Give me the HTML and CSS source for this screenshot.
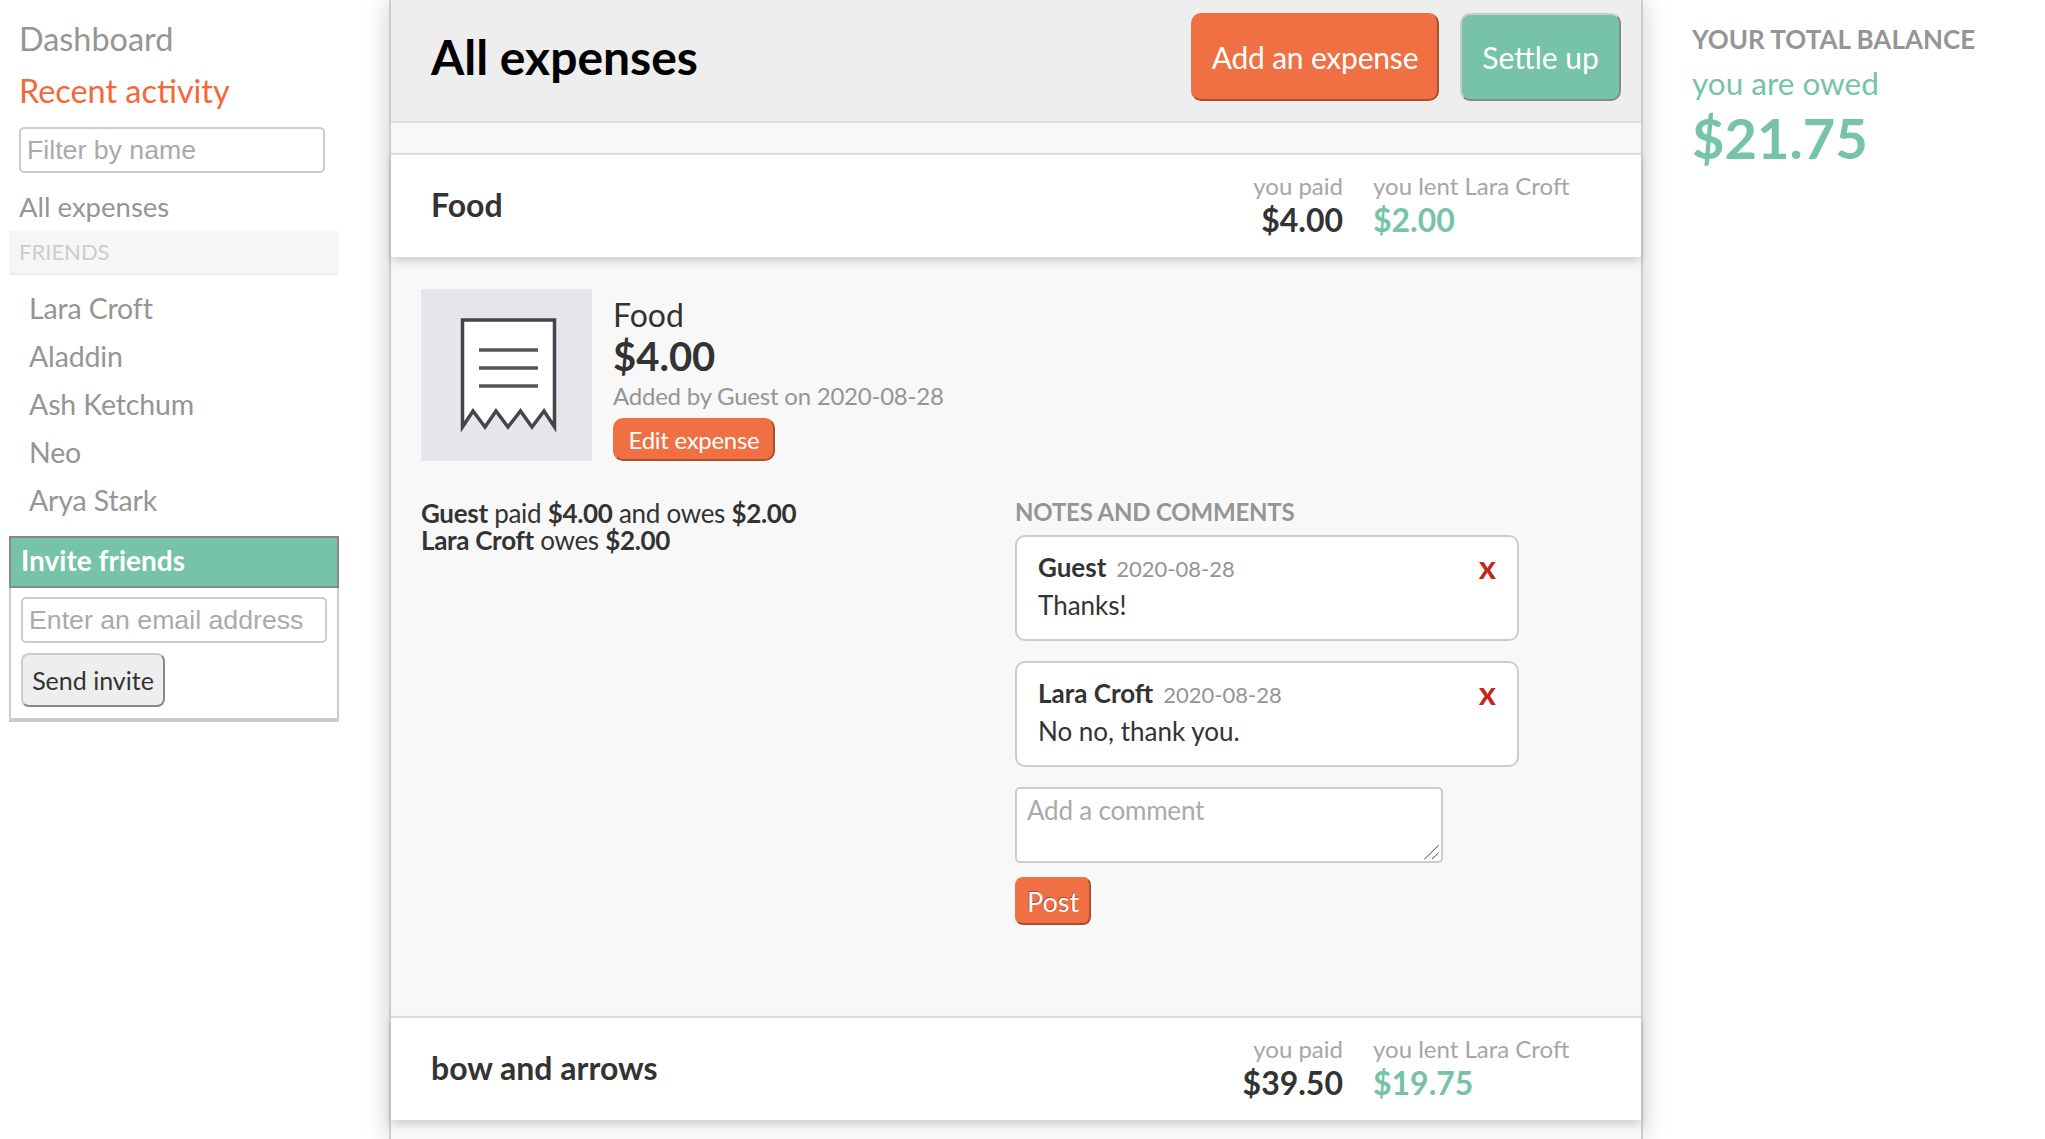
FILE: index.html
```html
<!DOCTYPE html>
<html lang="en">
<head>
  <meta charset="UTF-8" />
  <meta name="viewport" content="width=device-width, initial-scale=1.0" />
  <title>All expenses</title>
  <link rel="stylesheet" href="styles.css">
</head>
<body>
  <div class="page">
    <aside class="sidebar">
      <a class="nav-link">Dashboard</a>
      <a class="nav-link nav-active">Recent activity</a>
      <input class="text-input filter-input" type="text" placeholder="Filter by name" />
      <a class="all-link">All expenses</a>
      <div class="friends-title">FRIENDS</div>
      <ul class="friends">
        <li>Lara Croft</li>
        <li>Aladdin</li>
        <li>Ash Ketchum</li>
        <li>Neo</li>
        <li>Arya Stark</li>
      </ul>
      <div class="invite">
        <div class="invite-title">Invite friends</div>
        <div class="invite-body">
          <input class="text-input" type="text" placeholder="Enter an email address" />
          <button class="btn-send">Send invite</button>
        </div>
      </div>
    </aside>

    <main class="main">
      <header class="top">
        <h1>All expenses</h1>
        <div class="top-actions">
          <button class="btn btn-orange">Add an expense</button>
          <button class="btn btn-green">Settle up</button>
        </div>
      </header>

      <div class="expense">
        <div class="expense-name">Food</div>
        <div class="paid">
          <span class="label">you paid</span>
          <strong>$4.00</strong>
        </div>
        <div class="lent">
          <span class="label">you lent Lara Croft</span>
          <strong>$2.00</strong>
        </div>
      </div>

      <section class="detail">
        <div class="summary">
          <div class="thumb">
            <svg width="171" height="172" viewBox="0 0 171 172">
              <path d="M41.5 138V31H133.5V138L123 122L111 138L99.5 122L87 138L75 122L64 138L52 122Z" fill="#fff" stroke="#43464b" stroke-width="3.5" />
              <path d="M58 61H117M58 79H117M58 97H117" fill="none" stroke="#53565b" stroke-width="3.5" />
            </svg>
          </div>
          <div class="summary-text">
            <div class="summary-name">Food</div>
            <div class="summary-cost">$4.00</div>
            <div class="summary-added">Added by Guest on 2020-08-28</div>
            <button class="btn-small">Edit expense</button>
          </div>
        </div>
        <div class="columns">
          <div class="shares">
            <div><b>Guest</b> paid <b>$4.00</b> and owes <b>$2.00</b></div>
            <div><b>Lara Croft</b> owes <b>$2.00</b></div>
          </div>
          <div class="notes">
            <div class="notes-title">NOTES AND COMMENTS</div>
            <div class="comment">
              <div class="comment-head"><b>Guest</b><span class="comment-date">2020-08-28</span></div>
              <div>Thanks!</div>
              <span class="comment-x">x</span>
            </div>
            <div class="comment">
              <div class="comment-head"><b>Lara Croft</b><span class="comment-date">2020-08-28</span></div>
              <div>No no, thank you.</div>
              <span class="comment-x">x</span>
            </div>
            <div class="comment-wrap">
              <textarea class="comment-box" placeholder="Add a comment"></textarea>
              <svg class="grip" width="16" height="16" viewBox="0 0 16 16">
                <path d="M0.3 15.3L14.6 1.3M8 15L14.6 9" fill="none" stroke="#444" stroke-width="1" />
              </svg>
            </div>
            <button class="btn-post">Post</button>
          </div>
        </div>
      </section>

      <div class="expense">
        <div class="expense-name">bow and arrows</div>
        <div class="paid">
          <span class="label">you paid</span>
          <strong>$39.50</strong>
        </div>
        <div class="lent">
          <span class="label">you lent Lara Croft</span>
          <strong>$19.75</strong>
        </div>
      </div>
    </main>

    <aside class="balance">
      <div class="balance-title">YOUR TOTAL BALANCE</div>
      <div class="balance-owed">you are owed</div>
      <div class="balance-amount">$21.75</div>
    </aside>
  </div>
</body>
</html>
```

FILE: styles.css
```css
html, body {
  margin: 0;
  padding: 0;
  height: 100%;
  overflow: hidden;
}
body {
  background: #fff;
  color: #333;
  font-family: Lato, "Open Sans", sans-serif;
  font-size: 26px;
}
.page {
  display: flex;
  height: 1139px;
}
button {
  font-family: Lato, sans-serif;
  cursor: pointer;
}

/* left column */
.sidebar {
  width: 389px;
  flex: none;
  padding: 13px 0 0 9px;
  box-sizing: border-box;
}
.nav-link {
  display: block;
  padding-left: 10px;
  font-size: 32.4px;
  line-height: 52px;
  color: #959595;
}
.nav-active {
  color: #f0693a;
}
.text-input {
  display: block;
  box-sizing: border-box;
  width: 306px;
  height: 46px;
  padding: 0 6px;
  border: 2px solid #ccc;
  border-radius: 5px;
  background: #fff;
  font-family: "Liberation Sans", Arial, sans-serif;
  font-size: 26.7px;
}
.text-input::placeholder {
  color: #aaa;
}
.filter-input {
  margin: 10px 0 0 10px;
}
.all-link {
  display: block;
  padding-left: 10px;
  margin: 14px 0 4px;
  font-size: 27.5px;
  line-height: 40px;
  color: #959595;
}
.friends-title {
  width: 330px;
  height: 44px;
  box-sizing: border-box;
  padding-left: 10px;
  background: #f6f6f6;
  border-bottom: 2px solid #eee;
  font-size: 22px;
  line-height: 42px;
  color: #ccc;
}
.friends {
  list-style: none;
  margin: 9px 0 0;
  padding: 0 0 0 20px;
}
.friends li {
  font-size: 28.5px;
  letter-spacing: -0.15px;
  line-height: 48px;
  color: #959595;
}
.invite {
  width: 330px;
  height: 186px;
  margin-top: 12px;
  box-sizing: border-box;
  border: 2px solid #ccc;
  border-top: none;
  border-bottom-width: 4px;
}
.invite-title {
  margin: 0 -2px;
  height: 52px;
  box-sizing: border-box;
  padding-left: 10px;
  background: #76c3a8;
  border: 2px solid #888;
  font-size: 28px;
  font-weight: 700;
  line-height: 45px;
  color: #fff;
}
.invite-body {
  padding: 9px 0 0 10px;
}
.btn-send {
  display: block;
  width: 144px;
  height: 54px;
  margin-top: 10px;
  border: 2px solid #ccc;
  border-right-color: #888;
  border-bottom-color: #888;
  border-radius: 8px;
  background: #eee;
  color: #333;
  font-size: 25px;
  padding: 0;
}

/* center column */
.main {
  width: 1254px;
  flex: none;
  box-sizing: border-box;
  background: #f8f8f8;
  border-left: 2px solid #ccc;
  border-right: 2px solid #ccc;
  box-shadow: 0 0 24px rgba(0, 0, 0, 0.2);
}
.top {
  display: flex;
  align-items: center;
  justify-content: space-between;
  height: 123px;
  box-sizing: border-box;
  padding: 0 20px 8px 40px;
  background: #eee;
  border-bottom: 2px solid #ddd;
}
.top h1 {
  margin: 0;
  font-size: 48px;
  font-weight: 700;
  color: #000;
}
.top-actions {
  display: flex;
  gap: 21px;
}
.btn {
  height: 88px;
  padding: 0;
  border-radius: 10px;
  color: #fff;
  font-size: 30px;
}
.btn-orange {
  width: 248px;
  background: #f07043;
  border: 2px solid #f07043;
  border-right-color: #a9502f;
  border-bottom-color: #a9502f;
  letter-spacing: -0.2px;
}
.btn-green {
  width: 161px;
  background: #76c3a8;
  border: 2px solid #ccc;
  border-right-color: #888;
  border-bottom-color: #888;
}
.expense {
  display: flex;
  align-items: center;
  height: 104px;
  margin-top: 30px;
  box-sizing: border-box;
  padding: 0 0 2px 40px;
  background: #fff;
  border-top: 2px solid #ddd;
  box-shadow: 0 5px 8px rgba(0, 0, 0, 0.15);
}
.detail + .expense {
  margin-top: 0;
}
.expense-name {
  flex: 1;
  padding-bottom: 2px;
  font-size: 32px;
  font-weight: 700;
}
.paid {
  text-align: right;
}
.lent {
  width: 268px;
  margin-left: 30px;
}
.paid strong, .lent strong {
  display: block;
  font-size: 32px;
  line-height: 38px;
}
.lent strong {
  color: #76c3a8;
}
.label {
  display: block;
  font-size: 24px;
  line-height: 30px;
  color: #a6a6a6;
}
.detail {
  height: 759px;
  box-sizing: border-box;
  padding: 32px 0 0 30px;
}
.summary {
  display: flex;
  gap: 21px;
}
.thumb {
  width: 171px;
  height: 172px;
  background: #e6e7ec;
}
.thumb svg {
  display: block;
}
.summary-name {
  margin-top: 7px;
  font-size: 32px;
  line-height: 38px;
}
.summary-cost {
  font-size: 40px;
  font-weight: 700;
  line-height: 44px;
}
.summary-added {
  margin-top: 1px;
  font-size: 24px;
  letter-spacing: -0.23px;
  line-height: 34px;
  color: #959595;
}
.btn-small {
  display: block;
  width: 162px;
  height: 43px;
  margin-top: 5px;
  padding: 0;
  border: 2px solid #f07043;
  border-right-color: #a9502f;
  border-bottom-color: #a9502f;
  border-radius: 10px;
  background: #f07043;
  color: #fff;
  font-size: 24px;
  letter-spacing: -0.3px;
}
.columns {
  display: grid;
  grid-template-columns: 594px 1fr;
  margin-top: 38px;
}
.shares {
  padding-top: 1px;
  font-size: 26px;
  letter-spacing: -0.3px;
  line-height: 27px;
}
.notes-title {
  margin-bottom: 10px;
  font-size: 24px;
  font-weight: 700;
  letter-spacing: -0.2px;
  line-height: 26px;
  color: #959595;
}
.comment {
  position: relative;
  width: 504px;
  height: 106px;
  margin-bottom: 20px;
  box-sizing: border-box;
  padding: 12px 21px 0;
  background: #fff;
  border: 2px solid #ccc;
  border-radius: 10px;
  line-height: 36px;
  font-size: 26px;
}
.comment-date {
  margin-left: 10px;
  font-size: 22px;
  color: #959595;
}
.comment-x {
  position: absolute;
  top: 11px;
  right: 21px;
  color: #c0281a;
  font-size: 33px;
  font-weight: 700;
}
.comment-wrap {
  position: relative;
  width: 428px;
}
.comment-box {
  display: block;
  width: 428px;
  height: 76px;
  box-sizing: border-box;
  padding: 5px 10px;
  background: #fff;
  border: 2px solid #ccc;
  border-radius: 5px;
  font-family: Lato, sans-serif;
  font-size: 26px;
  letter-spacing: -0.2px;
  resize: none;
}
.comment-box::placeholder {
  color: #aaa;
}
.grip {
  position: absolute;
  right: 3px;
  bottom: 3px;
}
.btn-post {
  display: block;
  width: 76px;
  height: 48px;
  margin-top: 14px;
  padding: 0;
  border: 2px solid #f07043;
  border-right-color: #a9502f;
  border-bottom-color: #a9502f;
  border-radius: 8px;
  background: #f07043;
  color: #fff;
  font-size: 27px;
  text-shadow: -1px -1px 0 rgba(0, 0, 0, 0.35);
}

/* right column */
.balance {
  flex: 1;
  padding: 21px 0 0 49px;
}
.balance-title {
  font-size: 26px;
  font-weight: 700;
  line-height: 36px;
  color: #959595;
}
.balance-owed {
  margin-top: 4px;
  font-size: 31.5px;
  line-height: 44px;
  color: #76c3a8;
}
.balance-amount {
  font-size: 56px;
  font-weight: 700;
  line-height: 66px;
  color: #76c3a8;
}
```
